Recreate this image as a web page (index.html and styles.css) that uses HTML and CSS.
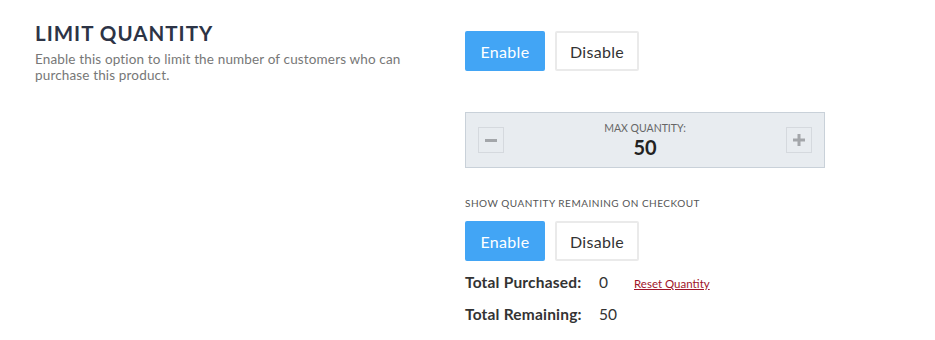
FILE: index.html
```html
<!DOCTYPE html>
<html lang="en">
<head>
  <meta charset="UTF-8" />
  <meta name="viewport" content="width=device-width, initial-scale=1.0"/>
  <title>Limit Quantity</title>
  <link rel="stylesheet" href="styles.css">
</head>
<body>
  <div class="section">
    <div class="intro">
      <h2>LIMIT QUANTITY</h2>
      <p>Enable this option to limit the number of customers who can purchase this product.</p>
    </div>

    <div class="settings">
      <div class="toggle">
        <button class="btn active">Enable</button>
        <button class="btn">Disable</button>
      </div>

      <div class="qty-box">
        <button class="step">
          <svg width="12" height="12" viewBox="0 0 12 12"><rect x="0" y="5" width="12" height="3" fill="#a3a6aa"/></svg>
        </button>
        <div class="qty-value">
          <span class="qty-label">MAX QUANTITY:</span>
          <span class="qty-num">50</span>
        </div>
        <button class="step">
          <svg width="12" height="12" viewBox="0 0 12 12"><rect x="0" y="4.5" width="12" height="3" fill="#a3a6aa"/><rect x="4.5" y="0" width="3" height="12" fill="#a3a6aa"/></svg>
        </button>
      </div>

      <div class="small-label">SHOW QUANTITY REMAINING ON CHECKOUT</div>
      <div class="toggle">
        <button class="btn active">Enable</button>
        <button class="btn">Disable</button>
      </div>

      <div class="totals">
        <div class="total-row">
          <span class="total-name">Total Purchased:</span>
          <span class="total-val">0</span>
          <a href="#" class="reset">Reset Quantity</a>
        </div>
        <div class="total-row">
          <span class="total-name">Total Remaining:</span>
          <span class="total-val">50</span>
        </div>
      </div>
    </div>
  </div>
</body>
</html>
```

FILE: styles.css
```css
body {
  font-family: Lato, 'Open Sans', sans-serif;
  background-color: #fff;
  margin: 0;
  color: #333;
}

.section {
  display: flex;
  padding: 21px 0 0 35px;
}

.intro {
  width: 430px;
}

.intro h2 {
  font-size: 20.5px;
  font-weight: 700;
  color: #2d3446;
  margin: 0 0 6px;
  line-height: 24px;
  letter-spacing: 1px;
}

.intro p {
  font-size: 13.5px;
  line-height: 16px;
  color: #777;
  margin: 0;
  width: 390px;
  letter-spacing: 0.15px;
}

.toggle {
  display: flex;
  gap: 10px;
}

.btn {
  font-family: inherit;
  height: 40px;
  font-size: 16px;
  padding: 0;
  border: 2px solid #eaeaea;
  background: #fff;
  color: #333;
  border-radius: 2px;
  cursor: pointer;
  width: 84px;
  letter-spacing: 0.3px;
}

.btn.active {
  background: #42a5f5;
  border-color: #42a5f5;
  color: #fff;
  width: 80px;
}

.settings {
  padding-top: 10px;
}

.qty-box {
  margin-top: 41px;
  width: 334px;
  height: 54px;
  background: #e8ecf0;
  border: 1px solid #c9d1d9;
  display: flex;
  align-items: center;
  justify-content: space-between;
  padding: 0 12px;
}

.step {
  width: 26px;
  height: 26px;
  border: 1px solid #d5d9de;
  background: transparent;
  display: flex;
  align-items: center;
  justify-content: center;
  padding: 0;
}

.qty-value {
  display: flex;
  flex-direction: column;
  align-items: center;
}

.qty-label {
  font-size: 10.5px;
  color: #666;
  line-height: 14px;
}

.qty-num {
  font-size: 20px;
  font-weight: 700;
  color: #222;
  line-height: 25px;
}

.small-label {
  margin-top: 29px;
  font-size: 10px;
  color: #555;
  letter-spacing: 0.5px;
  line-height: 12px;
  margin-bottom: 12px;
}

.totals {
  margin-top: 5px;
}

.total-row {
  display: flex;
  align-items: baseline;
  height: 32px;
  line-height: 32px;
}

.total-name {
  font-size: 15.5px;
  font-weight: 700;
  color: #333;
  width: 134px;
  letter-spacing: 0.2px;
}

.total-val {
  font-size: 15.5px;
  color: #333;
  width: 35px;
}

.reset {
  font-size: 11.5px;
  color: #a0142a;
}
```
